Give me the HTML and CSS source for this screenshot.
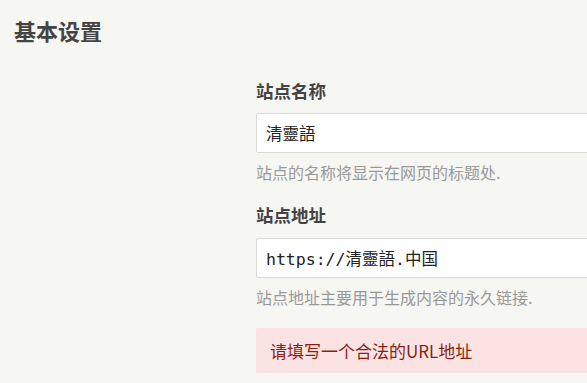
FILE: index.html
```html
<!DOCTYPE html>
<html>
<head>
    <title>基本设置</title>
    <link rel="stylesheet" href="styles.css">
</head>
<body>
    <div class="main">
        <h2 class="page-title">基本设置</h2>

        <div class="settings-row">
            <div class="settings-side"></div>
            <form class="settings-form">
                <div class="field">
                    <label class="field-label" for="title">站点名称</label>
                    <input class="text-input" id="title" type="text" value="清靈語">
                    <p class="field-hint">站点的名称将显示在网页的标题处.</p>
                </div>
                <div class="field">
                    <label class="field-label" for="url">站点地址</label>
                    <input class="text-input" id="url" type="text" value="https://清靈語.中国">
                    <p class="field-hint">站点地址主要用于生成内容的永久链接.</p>
                </div>
                <div class="message error">请填写一个合法的URL地址</div>
            </form>
        </div>
    </div>
</body>
</html>
```

FILE: styles.css
```css
html, body {
    overflow: hidden;
}
body {
    margin: 0;
    background-color: #f6f6f3;
    font-family: "Noto Sans CJK SC", "Noto Sans", sans-serif;
    color: #444;
}
.page-title {
    margin: 15px 0 0 14px;
    font-size: 22px;
    line-height: 30px;
    font-weight: bold;
    color: #444;
}
.settings-row {
    display: flex;
}
.settings-side {
    flex: 0 0 256px;
}
.settings-form {
    flex: 0 0 420px;
    margin: 0;
}
.field {
    margin-top: 34px;
}
.field + .field {
    margin-top: 20px;
}
.field-label {
    display: block;
    font-size: 17.5px;
    line-height: 24px;
    font-weight: bold;
    color: #444;
    margin-bottom: 10px;
}
.field + .field .field-label {
    margin-bottom: 11px;
}
.text-input {
    display: block;
    box-sizing: border-box;
    width: 100%;
    height: 40px;
    padding: 0 9px;
    border: 1px solid #d9d9d6;
    border-radius: 2px;
    background-color: #fff;
    font-family: "DejaVu Sans Mono", "Noto Sans CJK SC", monospace;
    font-size: 16.5px;
    color: #222;
}
.field-hint {
    margin: 8px 0 0;
    font-size: 16px;
    line-height: 22px;
    color: #999;
}
.message {
    margin-top: 20px;
    padding: 10px 14px;
    border-radius: 2px;
    font-size: 17px;
    line-height: 25px;
}
.error {
    background-color: #fbe3e4;
    color: #8a1f11;
}
```
